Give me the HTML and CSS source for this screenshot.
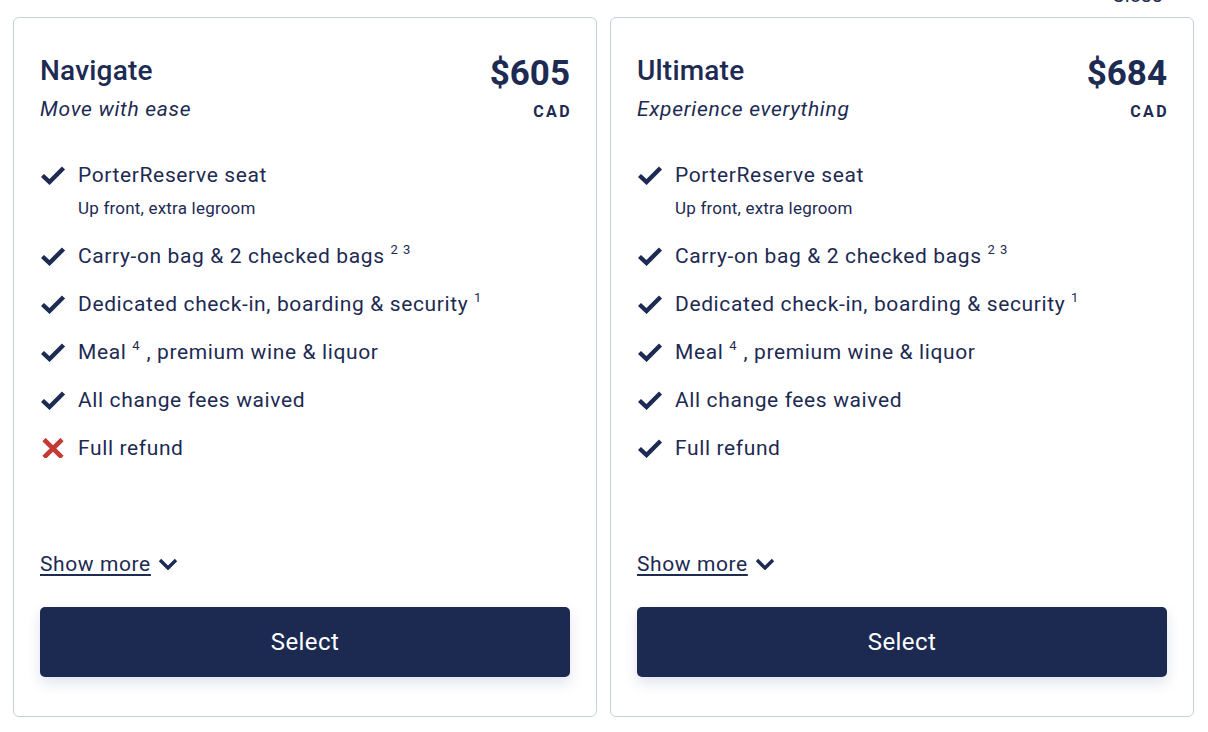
FILE: index.html
```html
<!DOCTYPE html>
<html lang="en">
<head>
<meta charset="utf-8">
<title>Fare options</title>
<link rel="stylesheet" href="styles.css">
</head>
<body>
<div class="topbar"><span class="toplink">Close <svg class="up" viewBox="0 0 20 12" width="20" height="12"><path d="M2 10 L10 2 L18 10" fill="none" stroke="#1d2a52" stroke-width="3"/></svg></span></div>
<main class="cards">
  <section class="card">
    <header class="card-head">
      <div>
        <h2 class="title">Navigate</h2>
        <p class="tagline">Move with ease</p>
      </div>
      <div class="price">
        <div class="amount">$605</div>
        <div class="currency">CAD</div>
      </div>
    </header>
    <ul class="features">
      <li class="feat"><svg class="ico" viewBox="0 0 26 20"><path d="M2.5 10.5 L9.5 17 L23.5 3" fill="none" stroke="#1d2a52" stroke-width="4.4"/></svg><div><div>PorterReserve seat</div><div class="sub">Up front, extra legroom</div></div></li>
      <li class="feat"><svg class="ico" viewBox="0 0 26 20"><path d="M2.5 10.5 L9.5 17 L23.5 3" fill="none" stroke="#1d2a52" stroke-width="4.4"/></svg><div>Carry-on bag &amp; 2 checked bags <sup>2 3</sup></div></li>
      <li class="feat"><svg class="ico" viewBox="0 0 26 20"><path d="M2.5 10.5 L9.5 17 L23.5 3" fill="none" stroke="#1d2a52" stroke-width="4.4"/></svg><div>Dedicated check-in, boarding &amp; security <sup>1</sup></div></li>
      <li class="feat"><svg class="ico" viewBox="0 0 26 20"><path d="M2.5 10.5 L9.5 17 L23.5 3" fill="none" stroke="#1d2a52" stroke-width="4.4"/></svg><div>Meal <sup>4</sup> , premium wine &amp; liquor</div></li>
      <li class="feat"><svg class="ico" viewBox="0 0 26 20"><path d="M2.5 10.5 L9.5 17 L23.5 3" fill="none" stroke="#1d2a52" stroke-width="4.4"/></svg><div>All change fees waived</div></li>
      <li class="feat"><svg class="ico" viewBox="0 0 26 20"><path d="M4 1.5 L22 19.5 M22 1.5 L4 19.5" fill="none" stroke="#c23a36" stroke-width="4.6"/></svg><div>Full refund</div></li>
    </ul>
    <div class="more-row"><a class="more" href="#">Show more</a><svg class="chev" viewBox="0 0 20 12" width="20" height="12"><path d="M2 2 L10 10 L18 2" fill="none" stroke="#1d2a52" stroke-width="3.4"/></svg></div>
    <button class="select">Select</button>
  </section>
  <section class="card">
    <header class="card-head">
      <div>
        <h2 class="title">Ultimate</h2>
        <p class="tagline">Experience everything</p>
      </div>
      <div class="price">
        <div class="amount">$684</div>
        <div class="currency">CAD</div>
      </div>
    </header>
    <ul class="features">
      <li class="feat"><svg class="ico" viewBox="0 0 26 20"><path d="M2.5 10.5 L9.5 17 L23.5 3" fill="none" stroke="#1d2a52" stroke-width="4.4"/></svg><div><div>PorterReserve seat</div><div class="sub">Up front, extra legroom</div></div></li>
      <li class="feat"><svg class="ico" viewBox="0 0 26 20"><path d="M2.5 10.5 L9.5 17 L23.5 3" fill="none" stroke="#1d2a52" stroke-width="4.4"/></svg><div>Carry-on bag &amp; 2 checked bags <sup>2 3</sup></div></li>
      <li class="feat"><svg class="ico" viewBox="0 0 26 20"><path d="M2.5 10.5 L9.5 17 L23.5 3" fill="none" stroke="#1d2a52" stroke-width="4.4"/></svg><div>Dedicated check-in, boarding &amp; security <sup>1</sup></div></li>
      <li class="feat"><svg class="ico" viewBox="0 0 26 20"><path d="M2.5 10.5 L9.5 17 L23.5 3" fill="none" stroke="#1d2a52" stroke-width="4.4"/></svg><div>Meal <sup>4</sup> , premium wine &amp; liquor</div></li>
      <li class="feat"><svg class="ico" viewBox="0 0 26 20"><path d="M2.5 10.5 L9.5 17 L23.5 3" fill="none" stroke="#1d2a52" stroke-width="4.4"/></svg><div>All change fees waived</div></li>
      <li class="feat"><svg class="ico" viewBox="0 0 26 20"><path d="M2.5 10.5 L9.5 17 L23.5 3" fill="none" stroke="#1d2a52" stroke-width="4.4"/></svg><div>Full refund</div></li>
    </ul>
    <div class="more-row"><a class="more" href="#">Show more</a><svg class="chev" viewBox="0 0 20 12" width="20" height="12"><path d="M2 2 L10 10 L18 2" fill="none" stroke="#1d2a52" stroke-width="3.4"/></svg></div>
    <button class="select">Select</button>
  </section>
</main>
</body>
</html>
```
FILE: styles.css
```css
* { box-sizing: border-box; }
html, body { margin: 0; padding: 0; background: #fff; }
body {
  font-family: Roboto, "Liberation Sans", Arial, sans-serif;
  color: #1d2a52;
}
.topbar {
  height: 17px;
  display: flex;
  justify-content: flex-end;
  padding-right: 16px;
}
.toplink {
  display: flex;
  align-items: center;
  gap: 10px;
  margin-top: -15px;
  font-size: 20px;
  line-height: 20px;
  height: 20px;
}
.cards {
  display: flex;
  gap: 13px;
  padding: 0 14px 0 13px;
}
.card {
  width: 584px;
  height: 700px;
  border: 1px solid #c6cfe0;
  border-radius: 6px;
  padding: 36px 26px 39px 26px;
  display: flex;
  flex-direction: column;
  align-items: flex-start;
}
.card-head {
  width: 100%;
  display: flex;
  justify-content: space-between;
  align-items: flex-start;
}
.title {
  margin: 0;
  font-size: 28px;
  line-height: 34px;
  font-weight: 500;
  letter-spacing: 0.2px;
}
.tagline {
  margin: 9px 0 0;
  font-size: 21px;
  line-height: 24px;
  letter-spacing: 0.7px;
  font-style: italic;
}
.price { text-align: right; }
.amount {
  font-size: 35px;
  line-height: 40px;
  font-weight: 700;
}
.currency {
  font-size: 16px;
  line-height: 20px;
  font-weight: 700;
  letter-spacing: 2.4px;
  margin-right: -2px;
  margin-top: 8px;
}
.features {
  list-style: none;
  margin: 39px 0 0;
  padding: 0;
  display: flex;
  flex-direction: column;
  gap: 20px;
  font-size: 21px;
  line-height: 28px;
  letter-spacing: 0.62px;
}
.feat {
  display: flex;
  align-items: flex-start;
  gap: 12px;
}
.ico {
  width: 26px;
  height: 20px;
  margin-top: 4px;
  flex: none;
}
.sub {
  font-size: 17px;
  line-height: 22px;
  letter-spacing: 0.2px;
  margin-top: 8px;
  margin-bottom: 3px;
}
sup {
  font-size: 13px;
  line-height: 0;
  vertical-align: 0;
  position: relative;
  top: -9px;
  letter-spacing: 1px;
}
.more-row {
  margin-top: auto;
  display: flex;
  align-items: center;
  gap: 7px;
}
.more {
  font-size: 21px;
  line-height: 24px;
  letter-spacing: 0.6px;
  color: #1d2a52;
  text-decoration: underline;
  text-decoration-thickness: 1.5px;
  text-underline-offset: 3px;
}
.chev { flex: none; }
.select {
  margin-top: 31px;
  width: 100%;
  height: 70px;
  border: 0;
  border-radius: 5px;
  background: #1c2a52;
  color: #fff;
  font-family: Roboto, "Liberation Sans", Arial, sans-serif;
  font-size: 24px;
  letter-spacing: 0.4px;
  box-shadow: 0 6px 14px rgba(40, 60, 140, 0.14);
}
```
